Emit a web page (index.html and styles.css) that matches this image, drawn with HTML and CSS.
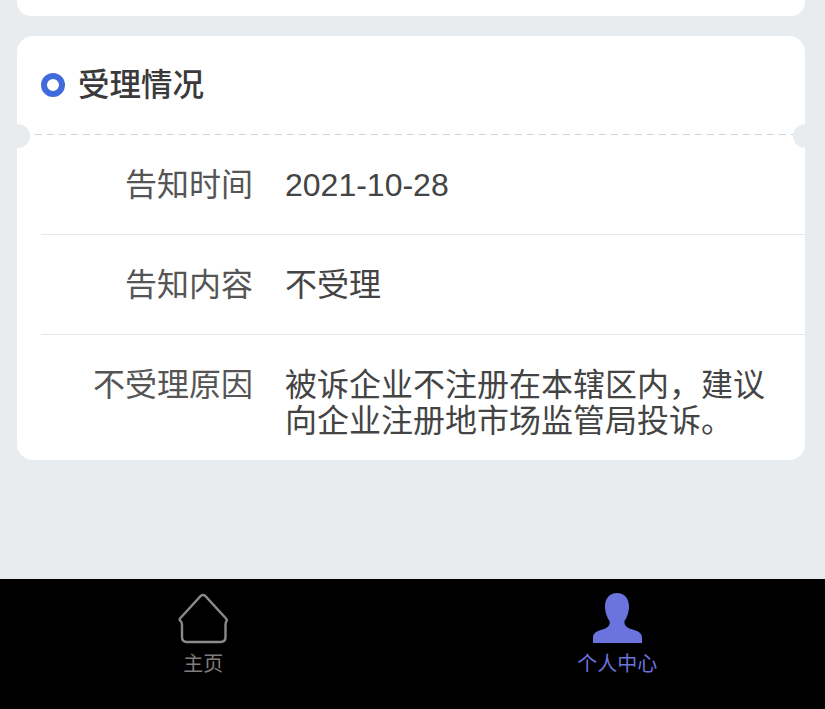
FILE: index.html

```html
<!DOCTYPE html>
<html lang="zh-CN">
<head>
    <meta charset="UTF-8">
    <meta name="viewport" content="width=device-width, initial-scale=1.0">
    <title>受理情况</title>
    <link rel="stylesheet" href="styles.css">
</head>
<body>

<div class="page">
    <div class="content">
        <!-- 上一张卡片的底部 -->
        <div class="card-tail"></div>

        <div class="card">
            <div class="card-title">
                <span class="dot"></span>
                <h2>受理情况</h2>
            </div>
            <div class="ticket-line">
                <span class="notch notch-left"></span>
                <span class="notch notch-right"></span>
            </div>
            <div class="row">
                <div class="label">告知时间</div>
                <div class="value">2021-10-28</div>
            </div>
            <div class="row">
                <div class="label">告知内容</div>
                <div class="value">不受理</div>
            </div>
            <div class="row row-last">
                <div class="label">不受理原因</div>
                <div class="value">被诉企业不注册在本辖区内，建议向企业注册地市场监管局投诉。</div>
            </div>
        </div>
    </div>

    <div class="tabbar">
        <a class="tab tab-home">
            <svg width="52" height="52" viewBox="0 0 52 52">
                <path d="M3 26.500 L23.500 4.200 Q26 2 28.500 4.200 L49 26.500 Q50.500 28 49.500 29 Q48.500 30.500 48.500 33 L48.500 45 Q48.500 50 43.500 50 L9.500 50 Q5 50 5 45 L5 33 Q5 30 3.500 29 Q2 28 3 26.500 Z" fill="none" stroke="#8a8a8a" stroke-width="2.400"/>
            </svg>
            <span>主页</span>
        </a>
        <a class="tab tab-user">
            <svg width="52" height="52" viewBox="0 0 52 52">
                <path d="M26 1 C34.500 1 38 7.500 38 14.500 C38 21 35.500 26 33.500 29 C33 33 35.500 35.500 40 37 C47 39 51 40.500 51 46 L51 51 L2 51 L2 46 C2 40.500 6 39 13 37 C17 35.500 19.500 33 18.500 29 C16.500 26 14 21 14 14.500 C14 7.500 17.500 1 26 1 Z" fill="#6b73dc"/>
            </svg>
            <span>个人中心</span>
        </a>
    </div>
</div>

</body>
</html>
```

FILE: styles.css

```css
* {
    box-sizing: border-box;
}
body {
    margin: 0;
    font-family: "Liberation Sans", "Noto Sans CJK SC", sans-serif;
    background-color: #e8ecef;
}
.page {
    height: 709px;
    display: flex;
    flex-direction: column;
    overflow: hidden;
}
.content {
    flex: 1;
    padding: 0 20px 0 17px;
}
.card-tail {
    height: 16px;
    background-color: #fff;
    border-radius: 0 0 14px 14px;
}
.card {
    margin-top: 20px;
    height: 424px;
    background-color: #fff;
    border-radius: 16px;
    overflow: hidden;
}
.card-title {
    height: 97.500px;
    padding-left: 24px;
    display: flex;
    align-items: center;
    gap: 13px;
}
.card-title h2 {
    margin: 0 0 6px;
    font-size: 31.500px;
    font-weight: 500;
    color: #3a3a3a;
}
.dot {
    width: 24px;
    height: 24px;
    border: 6px solid #3f6bdc;
    border-radius: 50%;
}
.ticket-line {
    position: relative;
    height: 1.500px;
    margin: 0 10px 0 18px;
    background-image: repeating-linear-gradient(to right, #cfd2d6 0, #cfd2d6 7px, transparent 7px, transparent 12px);
}
.notch {
    position: absolute;
    top: -10px;
    width: 24px;
    height: 24px;
    border-radius: 50%;
    background-color: #e8ecef;
}
.notch-left {
    left: -29px;
}
.notch-right {
    right: -22px;
}
.row {
    height: 100px;
    margin-left: 24px;
    padding-top: 32px;
    display: flex;
    border-bottom: 1px solid #e4e6e8;
    font-size: 32px;
    line-height: 36px;
    color: #555;
}
.row-last {
    height: 124px;
    border-bottom: 0;
}
.label {
    width: 212px;
    flex-shrink: 0;
    text-align: right;
}
.value {
    margin-left: 32px;
    width: 490px;
    color: #444;
}
.tabbar {
    height: 130px;
    background-color: #000;
    display: flex;
}
.tab {
    width: 50%;
    padding-top: 13px;
    display: flex;
    flex-direction: column;
    align-items: center;
    font-size: 20px;
    line-height: 24px;
    color: #7d7d7d;
}
.tab svg {
    display: block;
    margin-bottom: 8px;
}
.tab-home {
    padding-right: 6px;
}
.tab-user {
    color: #6b73dc;
    padding-right: 3px;
}
```
